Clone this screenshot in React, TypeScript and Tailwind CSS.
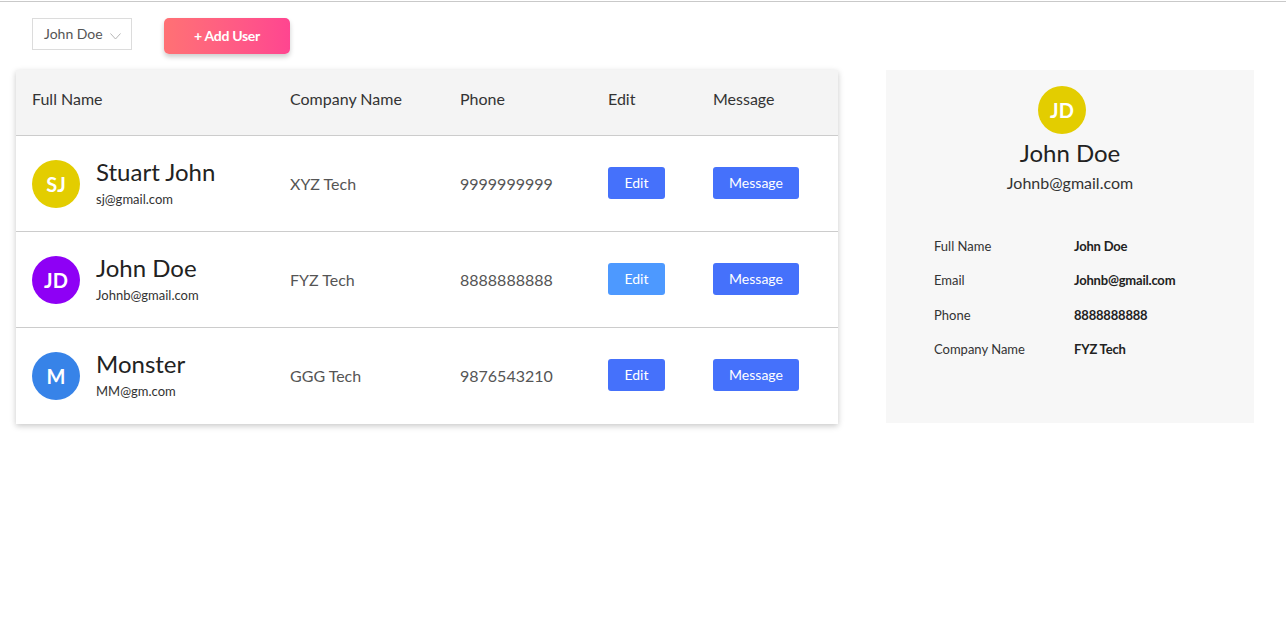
import React from "react";

type User = {
  initials: string;
  name: string;
  email: string;
  company: string;
  phone: string;
  avatar: string;
  editClass: string;
};

const users: User[] = [
  { initials: "SJ", name: "Stuart John", email: "sj@gmail.com", company: "XYZ Tech", phone: "9999999999", avatar: "bg-[#e3cd00]", editClass: "bg-[#4571fb]" },
  { initials: "JD", name: "John Doe", email: "Johnb@gmail.com", company: "FYZ Tech", phone: "8888888888", avatar: "bg-[#8e00f5]", editClass: "bg-[#4d99ff]" },
  { initials: "M", name: "Monster", email: "MM@gm.com", company: "GGG Tech", phone: "9876543210", avatar: "bg-[#3783e8]", editClass: "bg-[#4571fb]" },
];

const cols = "grid grid-cols-[258px_170px_148px_105px_1fr]";

export default function App() {
  return (
    <div className="min-h-[632px] bg-white text-[#333] font-['Lato','Liberation_Sans',sans-serif]">
      <div className="pt-px">
        <div className="h-px bg-[#c9c9c9]" />
      </div>
      <div className="flex items-start pl-8 pt-4 gap-8">
        <div className="flex h-8 w-[100px] items-center justify-between border border-[#dcdcdc] pl-[11px] pr-[10px] text-sm text-[#555]">
          <span>John Doe</span>
          <svg width="11" height="7" viewBox="0 0 11 7" className="mt-1">
            <path d="M0.5 0.5 L5.5 6 L10.5 0.5" fill="none" stroke="#b5b5b5" strokeWidth="1" />
          </svg>
        </div>
        <button className="h-9 w-[126px] rounded-[5px] bg-gradient-to-r from-[#ff7174] to-[#ff4590] text-sm font-bold text-white tracking-[-0.3px] shadow-[0_3px_5px_rgba(0,0,0,0.2)]">
          + Add User
        </button>
      </div>
      <div className="flex items-start pl-4 pt-4 gap-12">
        <div className="w-[822px] bg-white shadow-[0_2px_6px_rgba(0,0,0,0.22)]">
          <div className={`${cols} h-[66px] items-start pt-[17px] leading-6 bg-[#f4f4f4] border-b border-[#cccccc] text-base text-[#333]`}>
            <div className="px-4">Full Name</div>
            <div className="px-4">Company Name</div>
            <div className="px-4">Phone</div>
            <div className="px-4">Edit</div>
            <div className="px-4">Message</div>
          </div>
          {users.map((u, i) => (
            <div
              key={u.name}
              className={`${cols} h-[96px] items-center ${i < users.length - 1 ? "border-b border-[#cccccc]" : ""}`}
            >
              <div className="flex items-center px-4 gap-4">
                <div className={`flex h-12 w-12 shrink-0 items-center justify-center rounded-full ${u.avatar} text-xl font-bold text-white`}>
                  {u.initials}
                </div>
                <div className="flex flex-col pb-[3px]">
                  <span className="text-2xl leading-7 text-[#222]">{u.name}</span>
                  <span className="mt-[5px] text-[13px] leading-4 text-[#333]">{u.email}</span>
                </div>
              </div>
              <div className="px-4 text-base text-[#555]">{u.company}</div>
              <div className="px-4 text-base text-[#555]">{u.phone}</div>
              <div className="px-4 pb-[2px]">
                <button className={`h-8 w-[57px] rounded-[3px] ${u.editClass} text-sm text-white`}>Edit</button>
              </div>
              <div className="px-4 pb-[2px]">
                <button className="h-8 w-[86px] rounded-[3px] bg-[#4571fb] text-sm text-white">Message</button>
              </div>
            </div>
          ))}
        </div>
        <div className="w-[368px] h-[353px] bg-[#f7f7f7] pt-4">
          <div className="flex flex-col items-center">
            <div className="mr-4 flex h-12 w-12 items-center justify-center rounded-full bg-[#e3cd00] text-xl font-bold text-white">
              JD
            </div>
            <div className="mt-[3px] text-2xl leading-8 text-[#222]">John Doe</div>
            <div className="mt-[2px] text-base leading-6 text-[#333]">Johnb@gmail.com</div>
          </div>
          <div className="mt-[40px] pl-12 flex flex-col gap-[12.4px] text-[13px] leading-[22px]">
            {[
              ["Full Name", "John Doe"],
              ["Email", "Johnb@gmail.com"],
              ["Phone", "8888888888"],
              ["Company Name", "FYZ Tech"],
            ].map(([k, v]) => (
              <div key={k} className="flex">
                <div className="w-[140px] text-[#333]">{k}</div>
                <div className="font-bold text-[#222] tracking-[-0.2px]">{v}</div>
              </div>
            ))}
          </div>
        </div>
      </div>
    </div>
  );
}
